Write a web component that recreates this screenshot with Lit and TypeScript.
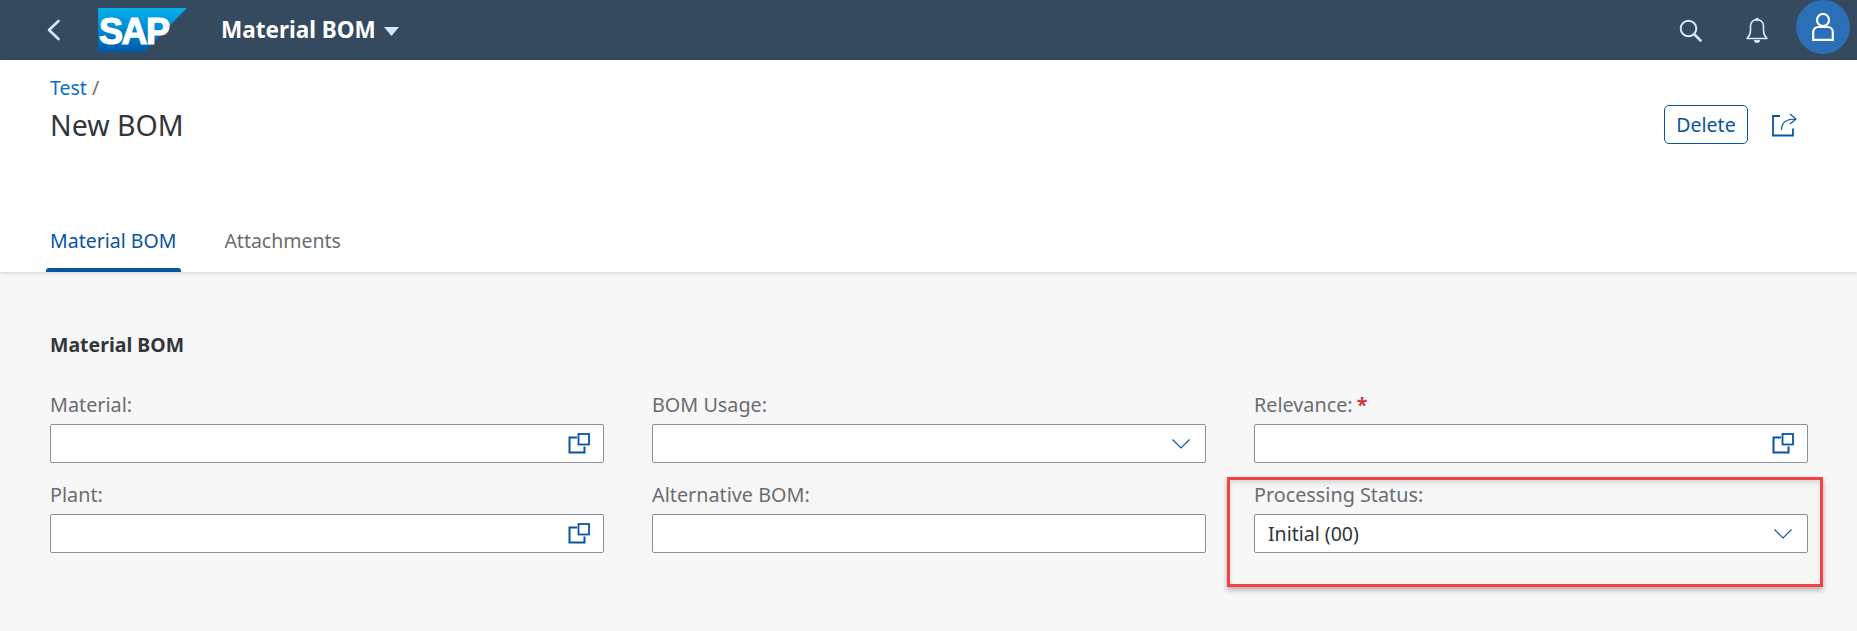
import { LitElement, html, css, svg } from 'lit';
import { customElement } from 'lit/decorators.js';

const valueHelp = html`<svg class="field-icon" width="22" height="21" viewBox="0 0 22 21" fill="none" stroke="#0854a0">
  <path d="M9 4.500H1.500v15h15v-6" stroke-width="2"/>
  <rect x="10.500" y="1" width="10.500" height="10.500" stroke-width="1.800"/>
</svg>`;

const chevron = html`<svg class="field-icon" width="18" height="10" viewBox="0 0 18 10" fill="none" stroke="#0854a0" stroke-width="1.100">
  <path d="M0.500 0.500L9 9l8.500-8.500"/>
</svg>`;

type Field = { label: string; kind: 'help' | 'select' | 'plain'; value?: string; required?: boolean };

const fields: Field[] = [
  { label: 'Material:', kind: 'help' },
  { label: 'BOM Usage:', kind: 'select' },
  { label: 'Relevance:', kind: 'help', required: true },
  { label: 'Plant:', kind: 'help' },
  { label: 'Alternative BOM:', kind: 'plain' },
  { label: 'Processing Status:', kind: 'select', value: 'Initial (00)' },
];

@customElement('app-root')
export class AppRoot extends LitElement {
  static styles = css`
    :host {
      display: block;
      position: relative;
      height: 631px;
      background: #f7f7f7;
      overflow: hidden;
      font-family: 'Noto Sans', 'Open Sans', sans-serif;
      font-size: 19.5px;
      color: #32363a;
    }
    .shell {
      height: 60px;
      background: #354a5f;
      display: flex;
      align-items: center;
    }
    .back {
      margin-left: 46px;
      width: 15px;
      height: 22px;
    }
    .logo {
      margin-left: 37px;
      width: 89px;
      height: 44px;
    }
    .logo text {
      font-family: 'Liberation Sans', sans-serif;
      font-weight: 700;
      font-size: 36px;
      letter-spacing: -1.500px;
      fill: #fff;
      stroke: #fff;
      stroke-width: 1.200px;
    }
    .app-title {
      margin-left: 34px;
      color: #fff;
      font-weight: 700;
      font-size: 22.500px;
      line-height: 24px;
    }
    .caret {
      margin-left: 8px;
      margin-top: 3px;
    }
    .shell-actions {
      margin-left: auto;
      display: flex;
      align-items: center;
      height: 60px;
    }
    .search {
      margin-right: 44px;
    }
    .bell {
      margin-right: 28px;
    }
    .avatar {
      width: 54px;
      height: 54px;
      margin: -6px 7px 0 0;
      border-radius: 50%;
      background: #2b6fb6;
      display: flex;
      align-items: center;
      justify-content: center;
    }
    .page-head {
      background: #fff;
      height: 212px;
      box-sizing: border-box;
      padding: 17px 60px 0 50px;
      display: flex;
      flex-direction: column;
      box-shadow: 0 1px 4px rgba(0, 0, 0, 0.16);
      position: relative;
    }
    .title-row {
      display: flex;
      justify-content: space-between;
    }
    .crumb {
      line-height: 22px;
      color: #6a6d70;
    }
    .crumb a {
      color: #0a6ed1;
    }
    .page-title {
      margin-top: 8px;
      font-size: 28.500px;
      line-height: 36px;
      font-weight: 400;
    }
    .head-actions {
      display: flex;
      align-items: center;
      gap: 24px;
      margin-top: 28px;
      height: 39px;
    }
    .btn {
      width: 84px;
      height: 39px;
      box-sizing: border-box;
      border: 1px solid #0854a0;
      border-radius: 5px;
      background: #fff;
      color: #0854a0;
      display: flex;
      align-items: center;
      justify-content: center;
    }
    .tabs {
      margin-top: auto;
      display: flex;
      gap: 48px;
    }
    .tab {
      height: 44px;
      box-sizing: border-box;
      padding-top: 1px;
      display: flex;
      flex-direction: column;
      color: #6a6d70;
      line-height: 24px;
    }
    .tab.active {
      color: #0854a0;
    }
    .tab.active::after {
      content: '';
      display: block;
      height: 4px;
      margin: auto -5px 0 -4px;
      background: #0854a0;
      border-radius: 3px 3px 0 0;
    }
    .content {
      padding: 60px 49px 0 50px;
    }
    .section-title {
      font-weight: 700;
      line-height: 26px;
      margin-bottom: 36px;
    }
    .grid {
      display: grid;
      grid-template-columns: repeat(3, 1fr);
      column-gap: 48px;
      row-gap: 21px;
    }
    .label {
      height: 26px;
      line-height: 22px;
      margin-bottom: 4px;
      font-size: 19.800px;
      color: #6a6d70;
      display: block;
    }
    .req {
      color: #d0353a;
      font-weight: 700;
      margin-left: 4px;
    }
    .input {
      height: 39px;
      box-sizing: border-box;
      background: #fff;
      border: 1px solid #89919a;
      border-radius: 2px;
      padding: 0 13px;
      display: flex;
      align-items: center;
      line-height: 24px;
    }
    .input .field-icon {
      margin-left: auto;
    }
    .input svg[width='18'] {
      margin-right: 2px;
    }
    .marker {
      position: absolute;
      left: 1227px;
      top: 477px;
      width: 596px;
      height: 110px;
      box-sizing: border-box;
      border: 3px solid #f44242;
      box-shadow: 0 3px 5px rgba(0, 0, 0, 0.3), inset 0 3px 5px rgba(0, 0, 0, 0.12);
      pointer-events: none;
    }
  `;

  renderField(f: Field) {
    return html`<div class="field">
      <span class="label">${f.label}${f.required ? html`<span class="req">*</span>` : ''}</span>
      <div class="input">
        ${f.value ?? ''}
        ${f.kind === 'help' ? valueHelp : f.kind === 'select' ? chevron : ''}
      </div>
    </div>`;
  }

  render() {
    return html`
      <div class="shell">
        <svg class="back" viewBox="0 0 15 22" fill="none" stroke="#d1e8ff" stroke-width="2.600" stroke-linecap="round" stroke-linejoin="round">
          <path d="M12.500 2L3 11l9.500 9"/>
        </svg>
        <svg class="logo" viewBox="0 0 89 44">
          <defs>
            <linearGradient id="sap" x1="0" y1="0" x2="0" y2="1">
              <stop offset="0" stop-color="#00b1eb"/>
              <stop offset="0.5" stop-color="#0088d0"/>
              <stop offset="1" stop-color="#0058a8"/>
            </linearGradient>
          </defs>
          <polygon points="0,0 89,0 46,44 0,44" fill="url(#sap)"/>
          ${svg`<text x="1" y="36">SAP</text>`}
        </svg>
        <span class="app-title">Material BOM</span>
        <svg class="caret" width="15" height="9" viewBox="0 0 15 9"><path d="M0 0h15L7.500 9z" fill="#d1e8ff"/></svg>
        <div class="shell-actions">
          <svg class="search" width="23" height="23" viewBox="0 0 23 23" fill="none" stroke="#d1e8ff" stroke-linecap="round">
            <circle cx="9.500" cy="9.500" r="7.800" stroke-width="2"/>
            <path d="M15.500 15.500l6 6" stroke-width="2.600"/>
          </svg>
          <svg class="bell" width="22" height="26" viewBox="0 0 22 26" fill="none" stroke="#d1e8ff" stroke-width="1.600" stroke-linejoin="round">
            <path d="M1 21.500c2-2 3.500-4 3.500-8V9a6.500 6.500 0 0 1 13 0v4.500c0 4 1.500 6 3.500 8z"/>
            <circle cx="11" cy="2.500" r="1" fill="#d1e8ff"/>
            <path d="M8 23h6a3 3 0 0 1-6 0z" fill="#d1e8ff" stroke="none"/>
          </svg>
          <div class="avatar">
            <svg width="22" height="28" viewBox="0 0 22 28" fill="none" stroke="#fff" stroke-width="2.200">
              <circle cx="11" cy="7" r="6"/>
              <path d="M1.200 26.800V19a5 5 0 0 1 5-5h9.600a5 5 0 0 1 5 5v7.800z"/>
            </svg>
          </div>
        </div>
      </div>
      <div class="page-head">
        <div class="title-row">
          <div>
            <div class="crumb"><a>Test</a> /</div>
            <div class="page-title">New BOM</div>
          </div>
          <div class="head-actions">
            <div class="btn">Delete</div>
            <svg width="25" height="24" viewBox="0 0 25 24" fill="none" stroke="#0854a0">
              <path d="M8 3H1v19.500h20v-7" stroke-width="1.800"/>
              <path d="M9.500 17c0-7 4-11 13.500-11M18 1l6 5-6 5" stroke-width="1.200"/>
            </svg>
          </div>
        </div>
        <div class="tabs">
          <div class="tab active">Material BOM</div>
          <div class="tab">Attachments</div>
        </div>
      </div>
      <div class="content">
        <div class="section-title">Material BOM</div>
        <div class="grid">${fields.map((f) => this.renderField(f))}</div>
      </div>
      <div class="marker"></div>
    `;
  }
}
